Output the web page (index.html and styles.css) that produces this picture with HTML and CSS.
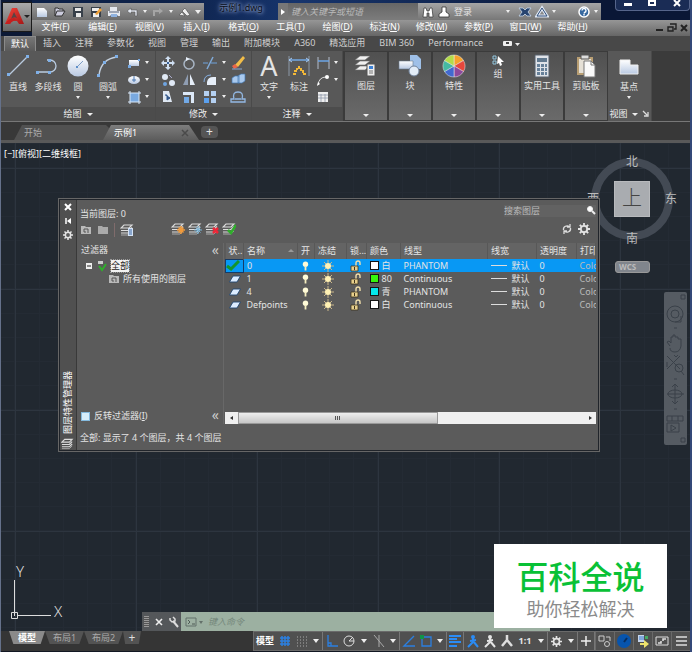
FILE: index.html
```
<!DOCTYPE html>
<html lang="zh-CN">
<head>
<meta charset="utf-8">
<title>示例1.dwg</title>
<link rel="stylesheet" href="styles.css">
</head>
<body>
<svg class="sprite" aria-hidden="true">
  <defs>
    <linearGradient id="pale" x1="0" y1="0" x2="0" y2="1"><stop offset="0" stop-color="#fff"/><stop offset="1" stop-color="#b9c9e2"/></linearGradient>
    <linearGradient id="red" x1="0" y1="0" x2="1" y2="1"><stop offset="0" stop-color="#f4473c"/><stop offset="1" stop-color="#a81616"/></linearGradient>
  </defs>
  <symbol id="bulb" viewBox="0 0 10 12"><circle cx="5" cy="4" r="3" fill="#fffbd8"/><path d="M4 6h2v5H4z" fill="#f5eec0"/></symbol>
  <symbol id="sun" viewBox="0 0 12 12"><path d="M6 0v12M0 6h12M2 2l8 8M10 2l-8 8" stroke="#c9b68a" stroke-width="1"/><circle cx="6" cy="6" r="3" fill="#fff1b4"/></symbol>
  <symbol id="lock" viewBox="0 0 12 12"><path d="M6 6V3a2 2 0 0 1 4 0v2" fill="none" stroke="#f1dfaa" stroke-width="1.400"/><path d="M1 6h7v5H1z" fill="#e7cf8c" stroke="#3c331d" stroke-width=".8"/><path d="M4 7h1v3H4z" fill="#40351c"/></symbol>
  <symbol id="sheet" viewBox="0 0 12 8"><path d="M4 1h7.500L8 7H.5z" fill="#dcecff" stroke="#20456f" stroke-width=".9"/></symbol>
  <symbol id="layers" viewBox="0 0 14 12"><path d="M4 1h8L9 4H1zM1 6.500h8l3-3M1 9h8l3-3" fill="none" stroke="#ddd" stroke-width="1.200"/><path d="M1 11h8l3-3" fill="none" stroke="#aaa"/></symbol>
  <symbol id="folder" viewBox="0 0 12 10"><path d="M1 1h4l1 1h5v7H1z" fill="#b9b9b9"/><path d="M4 4h4v4M4 4v3h2" fill="none" stroke="#555"/></symbol>
  <symbol id="gear" viewBox="0 0 12 12"><path d="M6 0v12M0 6h12M1.800 1.800l8.400 8.400M10.200 1.800l-8.400 8.400" stroke="currentColor" stroke-width="1.800"/><circle cx="6" cy="6" r="3.200" fill="#5b5b5b" stroke="currentColor" stroke-width="1.800"/></symbol>
  <symbol id="person" viewBox="0 0 14 14"><circle cx="7" cy="3" r="2" fill="currentColor"/><path d="M7 4v4l-5 5M7 7l5 6M4 7l6-1" fill="none" stroke="currentColor" stroke-width="2"/></symbol>
</svg>

<div class="window">
  <header class="chrome">
    <button class="app" aria-label="应用程序菜单">
      <svg width="28" height="28" viewBox="0 0 28 28"><path d="M2 21L9 5h5l7 16h-5l-2-3q-4-2-7 3z" fill="url(#red)"/><path d="M11 9l3 6q-3-2-6 1z" fill="#5a4444"/><path d="M2 21q4-6 9-6l3 3q-5-1-7 3z" fill="#c51f1f"/><path d="M21 12h6l-3 3z" fill="#222"/></svg>
    </button>
    <div class="titlebar">
      <div class="quick">
        <button aria-label="新建"><svg width="14" height="14"><path d="M2 3h7l3 3v6H2z" fill="url(#pale)"/></svg></button>
        <button aria-label="打开"><svg width="14" height="14"><path d="M2 11V3h3l1 1h4v2M2 11l2-5h8l-3 5z" fill="#ccd" stroke="#333"/></svg></button>
        <button aria-label="保存"><svg width="14" height="14"><path d="M2 2h10v10H2z" fill="#38404a"/><path d="M4 3h6v3H4zM5 8h5v4H5z" fill="#e8e8e8"/></svg></button>
        <button aria-label="另存为"><svg width="14" height="14"><path d="M2 2h10v10H2z" fill="#38404a"/><path d="M3 3h7v3H3zM4 8h6v4H4z" fill="#eee"/><path d="M6 9l5-6 2 2-5 5z" fill="#f0a13a"/></svg></button>
        <button aria-label="打印"><svg width="14" height="14"><path d="M3 2h7v4h3v5H1V6h2z" fill="#e5e8ee"/><path d="M2 7h10M3 11h8" stroke="#57637a"/><path d="M4 9h6v3H4z" fill="#8fb2e0"/></svg></button>
        <button aria-label="放弃"><svg width="14" height="14"><path d="M6 3L2 6l4 3V7h4v4h2V5H6z" fill="#e4e9f2" stroke="#555" stroke-width=".6"/></svg></button>
        <button class="caret" aria-label="放弃列表"></button>
        <button aria-label="重做"><svg width="14" height="14"><path d="M8 3l4 3-4 3V7H4v4H2V5h6z" fill="#a5a5a5"/></svg></button>
        <button class="caret" aria-label="重做列表"></button>
        <button aria-label="格式刷"><svg width="14" height="14"><path d="M2 10l3-3 3 4zM5 6l3-3 5 7-3 1z" fill="#ececec" stroke="#555" stroke-width=".7"/></svg></button>
        <button class="caret big" aria-label="自定义"></button>
      </div>
      <div class="doc-title">示例1.dwg</div>
      <button class="expand" aria-label="展开"><svg width="6" height="8"><path d="M1 1l4 3-4 3z" fill="#fff"/></svg></button>
      <input class="help-search" type="text" aria-label="搜索帮助" placeholder="键入关键字或短语">
      <div class="account">
        <button aria-label="搜索"><svg width="14" height="14"><path d="M2 12l1-9h2l1 3h2l1-3h2l1 9H8V8H6v4z" fill="#fff" stroke="#333" stroke-width=".7"/></svg></button>
        <button class="login"><svg width="14" height="14"><path d="M5 2h4v5l3 2v3H2V9l3-2z" fill="#fff" stroke="#333" stroke-width=".8"/></svg>登录</button>
        <button class="caret" aria-label="登录选项"></button>
        <button aria-label="Exchange"><svg width="14" height="14"><path d="M1 3h4l2 2 2-2h4l-3 4 3 4H9L7 9l-2 2H1l3-4z" fill="#27446f" stroke="#c9d9ee" stroke-width=".8"/></svg></button>
        <button aria-label="A360"><svg width="14" height="14"><path d="M7 3l5 8H2z" fill="none" stroke="#dfe8f6" stroke-width="3"/><path d="M7 3l5 8H2z" fill="none" stroke="#304d76"/></svg></button>
        <button class="caret" aria-label="A360 选项"></button>
        <button class="help" aria-label="帮助"><svg width="14" height="14"><circle cx="7" cy="7" r="5" fill="#36689f" stroke="#fff" stroke-width="1.500"/><path d="M5 5.500a2 2 0 1 1 2.500 2L7 8.500M7 9v1.500" stroke="#fff" stroke-width="1.400" fill="none"/></svg></button>
        <button class="caret" aria-label="帮助选项"></button>
      </div>
      <div class="winbtns">
        <button aria-label="最小化"><svg width="12" height="10"><path d="M2 4h8v3H2z" fill="#fff"/></svg></button>
        <button aria-label="最大化"><svg width="12" height="10"><path d="M3 2h6v4H3z" fill="none" stroke="#fff" stroke-width="2"/></svg></button>
        <button aria-label="关闭"><svg width="12" height="10"><path d="M3 1l6 6M9 1L3 7" stroke="#fff" stroke-width="2"/></svg></button>
      </div>
    </div>
    <nav class="menubar">
      <a href="#">文件(<u>F</u>)</a><a href="#">编辑(<u>E</u>)</a><a href="#">视图(<u>V</u>)</a><a href="#">插入(<u>I</u>)</a><a href="#">格式(<u>O</u>)</a><a href="#">工具(<u>T</u>)</a><a href="#">绘图(<u>D</u>)</a><a href="#">标注(<u>N</u>)</a><a href="#">修改(<u>M</u>)</a><a href="#">参数(<u>P</u>)</a><a href="#">窗口(<u>W</u>)</a><a href="#">帮助(<u>H</u>)</a>
      <div class="mdi">
        <button aria-label="最小化文档"><svg width="10" height="10"><path d="M1 6h7v2H1z" fill="#222"/></svg></button>
        <button aria-label="还原文档"><svg width="10" height="10"><path d="M3 1h6v5H7M1 4h5v4H1z" fill="none" stroke="#222" stroke-width="1.400"/></svg></button>
        <button aria-label="关闭文档"><svg width="10" height="10"><path d="M2 2l6 6M8 2L2 8" stroke="#222" stroke-width="2"/></svg></button>
      </div>
    </nav>
  </header>

  <nav class="tabs">
    <a class="on" href="#">默认</a><a href="#">插入</a><a href="#">注释</a><a href="#">参数化</a><a href="#">视图</a><a href="#">管理</a><a href="#">输出</a><a href="#">附加模块</a><a href="#">A360</a><a href="#">精选应用</a><a href="#">BIM 360</a><a href="#">Performance</a>
    <button class="ribbon-toggle" aria-label="最小化功能区"><svg width="20" height="8"><rect x="1" y="1" width="9" height="5" rx="1" fill="#eee"/><path d="M4 2h3v2H4z" fill="#444"/><path d="M13 3h5l-2.500 3z" fill="#eee"/></svg></button>
  </nav>

  <section class="ribbon">
    <div class="panel draw">
      <div class="tools">
        <button class="tool"><svg width="24" height="26"><path d="M3 22L21 4" stroke="#b9cbe0" stroke-width="1.300"/><path d="M1 20h3v3H1zM20 2h3v3h-3z" fill="#7fb0e8"/></svg><span>直线</span></button>
        <button class="tool"><svg width="26" height="26"><path d="M2 19h13a6 6 0 0 0 0-12h-3" fill="none" stroke="#b9cbe0" stroke-width="1.300"/><path d="M1 18h3v3H1zM13 18h3v3h-3zM13 6h3v3h-3z" fill="#7fb0e8"/></svg><span>多段线</span></button>
        <button class="tool drop"><svg width="24" height="26"><circle cx="12" cy="13" r="10.500" fill="url(#pale)"/><path d="M11 14l6-6" stroke="#7c9cc5"/><path d="M10 13h2v2h-2z" fill="#5d8fc9"/></svg><span>圆</span></button>
        <button class="tool drop"><svg width="24" height="26"><path d="M3 22Q5 6 21 4" fill="none" stroke="#c3cfdd" stroke-width="1.400"/><path d="M1 21h3v3H1zM7 8h3v3H7zM19 2h3v3h-3z" fill="#7fb0e8"/></svg><span>圆弧</span></button>
        <div class="small two">
          <button aria-label="矩形"><svg width="16" height="14"><path d="M3 4h10v6H3z" fill="url(#pale)"/><path d="M2 9h3v3H2zM12 3h2v2h-2z" fill="#77a9e2"/></svg></button><button class="caret" aria-label="矩形列表"></button>
          <button aria-label="椭圆"><svg width="16" height="14"><ellipse cx="8" cy="7" rx="6" ry="4" fill="url(#pale)"/><path d="M6 7h4M8 3v6" stroke="#4b79b3"/></svg></button><button class="caret" aria-label="椭圆列表"></button>
          <button aria-label="图案填充"><svg width="16" height="14"><path d="M4 3h9v9H4z" fill="#79a9e0"/><path d="M2 3h13M2 12h13M4 1v13M13 1v13" stroke="#d8e8fa"/></svg></button><button class="caret" aria-label="填充列表"></button>
        </div>
      </div>
      <button class="label">绘图<i class="tri"></i></button>
    </div>
    <div class="panel modify">
      <div class="tools">
        <div class="small five">
          <button aria-label="移动"><svg width="16" height="14"><path d="M8 0l3 3H9v3h3V4l3 3-3 3V8H9v3h2l-3 3-3-3h2V8H4v2L1 7l3-3v2h3V3H5z" fill="#cfdff2"/><path d="M7 6h2v2H7z" fill="#365f98"/></svg></button>
          <button aria-label="旋转"><svg width="16" height="14"><circle cx="8" cy="8" r="5" fill="none" stroke="#a9b6c5" stroke-width="1.500"/><path d="M5 1l4 2-4 2z" fill="#e6eef8"/></svg></button>
          <button aria-label="修剪"><svg width="16" height="14"><path d="M1 7h5M9 7h6" stroke="#6fa3dd"/><path d="M5 13L11 1" stroke="#7fa9d6" stroke-width="1.500"/></svg></button><button class="caret" aria-label="修剪列表"></button>
          <button aria-label="删除"><svg width="16" height="14"><path d="M5 9l8-9 2 2-7 9z" fill="#f2bd48"/><path d="M5 8l3 3-4 2-2-3z" fill="#e9654a"/><path d="M2 13h10" stroke="#89a5ce"/></svg></button>
          <button aria-label="复制"><svg width="16" height="14"><circle cx="5" cy="4" r="3" fill="#e0e9f5"/><circle cx="5" cy="11" r="2" fill="#6fa4e0"/><circle cx="12" cy="10" r="3" fill="#e0e9f5"/><path d="M9 2l3 3" stroke="#aac"/></svg></button>
          <button aria-label="镜像"><svg width="16" height="14"><path d="M7 1v11H2z" fill="#8f9db2"/><path d="M9 1v11h5z" fill="#e6eef8"/></svg></button>
          <button aria-label="圆角"><svg width="16" height="14"><path d="M5 12V9q1-5 6-5h3v8z" fill="#e6eef8"/><path d="M2 9q0-7 7-7" fill="none" stroke="#84aee0"/></svg></button><button class="caret" aria-label="圆角列表"></button>
          <button aria-label="分解"><svg width="16" height="14"><path d="M2 5l3-2h4v7H2zM8 3l3-2h4v7l-3 2H8z" fill="#a9c9ee" stroke="#4477b0" stroke-width=".7"/></svg></button>
          <button aria-label="拉伸"><svg width="16" height="14"><path d="M3 1h6l3 11H3z" fill="#dfe8f3"/><path d="M5 5h2v5l3-2-3-2" stroke="#31568a" fill="#31568a"/></svg></button>
          <button aria-label="缩放"><svg width="16" height="14"><path d="M2 2h11v11h-3V5H2z" fill="#dce8f7"/><path d="M3 7h5v6H3z" fill="#72a9e6"/></svg></button>
          <button aria-label="阵列"><svg width="16" height="14"><path d="M2 1h5v5H2zM9 1h5v5H9zM9 8h5v5H9z" fill="#b4d0f1"/><path d="M2 8h5v5H2z" fill="#5ba0ee"/></svg></button><button class="caret" aria-label="阵列列表"></button>
          <button aria-label="偏移"><svg width="16" height="14"><path d="M1 12h14v-3h-3q2-7-4-7T4 9H1zM5 9h6" fill="none" stroke="#93b8e3" stroke-width="1.300"/></svg></button>
        </div>
      </div>
      <button class="label">修改<i class="tri"></i></button>
    </div>
    <div class="panel annot">
      <div class="tools">
        <button class="tool drop"><b class="letter">A</b><span>文字</span></button>
        <button class="tool"><svg width="24" height="26"><path d="M2 3v20M22 3v20" stroke="#8c99a8"/><path d="M2 7h20" stroke="#72a8e5" stroke-width="1.500"/><path d="M5 5L2 7l3 2M19 5l3 2-3 2" stroke="#a7cbf5" fill="none"/><path d="M6 21h2v-3h2v-3M12 13v4M14 15v3h2v3h3" stroke="#f3b837" stroke-width="2" stroke-dasharray="3 1" fill="none"/></svg><span>标注</span></button>
        <div class="small two">
          <button aria-label="线性"><svg width="16" height="14"><path d="M3 1v12M14 1v12" stroke="#b3bccb"/><path d="M3 5h11" stroke="#6ba4e6" stroke-width="1.500"/></svg></button><button class="caret" aria-label="线性列表"></button>
          <button aria-label="引线"><svg width="16" height="14"><path d="M3 12q1-8 8-8" fill="none" stroke="#ddd"/><circle cx="12" cy="4" r="2" fill="#fff"/><path d="M2 13l1-4 2 2z" fill="#fff"/></svg></button><button class="caret" aria-label="引线列表"></button>
          <button aria-label="表格"><svg width="16" height="14"><path d="M3 2h10v10H3z" fill="#eee"/><path d="M3 5h10M3 8h10M6 4v8M10 4v8" stroke="#8d98a8" stroke-width=".8"/></svg></button>
        </div>
      </div>
      <button class="label">注释<i class="tri"></i></button>
    </div>
    <button class="fold"><svg width="26" height="26"><path d="M7 3h10l-5 4H2zM7 8h10l-5 4H2zM7 13h10l-5 4H2z" fill="#f0f0f0" stroke="#6b6b6b" stroke-width=".6"/><path d="M14 11h8v12h-8z" fill="#eee" stroke="#555"/><path d="M16 13h4v3h-4z" fill="#3c80d4"/><path d="M16 18h4M16 20h4" stroke="#777"/></svg><span>图层</span><i class="tri"></i></button>
    <button class="fold"><svg width="26" height="26"><path d="M13 2h7l4 4v10H13z" fill="#9fc0e8"/><path d="M2 8h14v8H2z" fill="url(#pale)" stroke="#69798e" stroke-width=".6"/><circle cx="17" cy="18" r="5" fill="#e3edf8" stroke="#71839c"/></svg><span>块</span><i class="tri"></i></button>
    <button class="fold"><svg width="26" height="26"><g transform="translate(13 13)" stroke="#eee" stroke-width=".5"><path d="M0 0V-11A11 11 0 0 1 9.500-5.500Z" fill="#f6a22b"/><path d="M0 0L9.500-5.500A11 11 0 0 1 9.500 5.500Z" fill="#e7473c"/><path d="M0 0L9.500 5.500A11 11 0 0 1 0 11Z" fill="#8d499b"/><path d="M0 0V11A11 11 0 0 1-9.500 5.500Z" fill="#4269cf"/><path d="M0 0L-9.500 5.500A11 11 0 0 1-9.500-5.500Z" fill="#45b9a2"/><path d="M0 0L-9.500-5.500A11 11 0 0 1 0-11Z" fill="#b4dc49"/></g></svg><span>特性</span><i class="tri"></i></button>
    <button class="fold"><svg width="26" height="14"><path d="M8 3h3v3H8zM8 8h3v3H8z" fill="none" stroke="#93c7df"/><path d="M13 3l6 6h-3l1 3-2 1-1-3-2 1z" fill="#fff"/></svg><span>组</span><i class="tri"></i></button>
    <button class="fold"><svg width="26" height="26"><path d="M6 2h14v22H6z" fill="#dfe3e9" stroke="#56606c"/><path d="M8 5h10v4H8z" fill="#61798f"/><path d="M8 11h3v3H8zM12 11h3v3h-3zM16 11h2v3h-2zM8 15h3v3H8zM12 15h3v3h-3zM16 15h2v3h-2zM8 19h3v3H8zM12 19h3v3h-3zM16 19h2v3h-2z" fill="#67819a"/></svg><span>实用工具</span><i class="tri"></i></button>
    <button class="fold"><svg width="26" height="26"><path d="M4 4h16v18H4z" fill="#b89e73"/><path d="M6 6h12v14H6z" fill="#e5e0d6"/><path d="M8 2h8v4H8z" fill="#ddd" stroke="#555"/><path d="M11 8h7l4 4v12H11z" fill="#fafafa" stroke="#777"/><path d="M18 8v4h4" fill="none" stroke="#777"/></svg><span>剪贴板</span><i class="tri"></i></button>
    <div class="panel view">
      <div class="tools"><button class="tool drop"><svg width="24" height="26"><path d="M3 7h10v5h8v9H3z" fill="url(#pale)" stroke="#eee"/></svg><span>基点</span></button></div>
      <button class="label">视图<i class="tri"></i><svg width="8" height="8"><path d="M1 1l4 4M6 2v4H2" stroke="#ddd" stroke-width="1.300" fill="none"/></svg></button>
    </div>
  </section>

  <nav class="files">
    <a href="#">开始</a>
    <a class="on" href="#">示例1<svg width="8" height="8"><path d="M1 1l6 6M7 1L1 7" stroke="#4a4a4a" stroke-width="1.500"/></svg></a>
    <button aria-label="新图形">+</button>
  </nav>

  <main class="canvas">
    <p class="viewport">[−][俯视][二维线框]</p>

    <div class="cube">
      <span class="north">北</span><span class="east">东</span><span class="south">南</span><span class="west">西</span>
      <span class="face">上</span>
    </div>
    <button class="wcs">WCS</button>
    <div class="navbar">
      <svg viewBox="0 0 23 153" fill="none" stroke="#3a4149"><path d="M17 3h4v4h-4zM17 146h4v4h-4z"/><circle cx="11" cy="22" r="8"/><circle cx="11" cy="22" r="4"/><path d="M17 24v6h-6M10 36h3M6 54l-3-4 2-1 2 2v-6h2v-2h2v2h3v2h3v7q-1 6-6 6t-5-4M3 64l13 13M16 64L3 77M10 63l2 2 2-2M3 70v5"/><circle cx="15" cy="76" r="4"/><path d="M17 79l3 4M10 87h3M11 92v20M3 102h17M8 95l3-3 3 3M8 109l3 3 3-3"/><ellipse cx="11" cy="102" rx="7" ry="4"/><path d="M10 117h3M3 124h16v5H3zM8 124v5M14 124v5M3 131h12v9H3zM7 133l5 3-5 3z"/></svg>
    </div>

    <section class="palette" aria-label="图层特性管理器">
      <div class="spine">
        <button aria-label="关闭"><svg width="10" height="10"><path d="M2 2l6 6M8 2L2 8" stroke="#fff" stroke-width="2"/></svg></button>
        <button aria-label="自动隐藏"><svg width="10" height="10"><path d="M3 2v6" stroke="#fff" stroke-width="1.500"/><path d="M8 2v6L4 5z" fill="#fff"/></svg></button>
        <button aria-label="特性"><svg width="10" height="10"><use href="#gear"/></svg></button>
        <span>图层特性管理器</span>
        <svg width="13" height="12"><use href="#layers"/></svg>
      </div>
      <div class="body">
        <div class="current"><span>当前图层: 0</span>
          <label class="find"><input type="text" aria-label="搜索图层" placeholder="搜索图层"><svg width="10" height="10"><circle cx="4" cy="4" r="2.500" fill="#fff" stroke="#eee"/><path d="M6 6l3 3" stroke="#eee" stroke-width="2"/></svg></label>
        </div>
        <div class="bar">
          <div class="set filters">
            <button aria-label="新建特性过滤器"><svg width="12" height="10"><use href="#folder"/></svg></button>
            <button aria-label="新建组过滤器"><svg width="12" height="10"><path d="M1 1h4l1 1h5v7H1z" fill="#aaa"/></svg></button>
            <i class="rule"></i>
            <button aria-label="图层状态管理器"><svg width="14" height="12"><use href="#layers"/><path d="M8 4h5v8H8z" fill="#d5e3f5"/><path d="M9 6h3M9 8h3M9 10h3" stroke="#3d68a6"/></svg></button>
          </div>
          <div class="set ops">
            <button aria-label="新建图层"><svg width="14" height="12"><use href="#layers"/><path d="M10 3v8M6 7h8M7.500 4.500l5 5M12.500 4.500l-5 5" stroke="#f19a3a" stroke-width="1.500"/></svg></button>
            <button aria-label="冻结的新图层"><svg width="14" height="12"><use href="#layers"/><path d="M10 3v8M6 7h8M7.500 4.500l5 5M12.500 4.500l-5 5" stroke="#79b6da"/></svg></button>
            <button aria-label="删除图层"><svg width="14" height="12"><use href="#layers"/><path d="M8 5l5 5M13 5l-5 5" stroke="#ed2637" stroke-width="2.500"/></svg></button>
            <button aria-label="置为当前"><svg width="14" height="12"><use href="#layers"/><path d="M6 7l3 3 5-8" fill="none" stroke="#2fae2b" stroke-width="2.500"/></svg></button>
          </div>
          <div class="set last">
            <button aria-label="刷新"><svg width="12" height="12"><path d="M2.500 7a3.500 3.500 0 0 1 6-3M9.500 5a3.500 3.500 0 0 1-6 3M9 1v3H6M3 11V8h3" fill="none" stroke="#ddd" stroke-width="1.300"/></svg></button>
            <button aria-label="设置"><svg width="12" height="12"><use href="#gear"/></svg></button>
          </div>
        </div>
        <div class="split">
          <div class="tree">
            <div class="head"><span>过滤器</span><button aria-label="收拢">«</button></div>
            <ul>
              <li><svg width="24" height="12"><path d="M1 3h6v6H1z" fill="#eee"/><path d="M2 6h4" stroke="#222"/><path d="M13 1h5v3h-5z" fill="#ccc"/><path d="M14 6l3 4 4-6" stroke="#2fae2b" stroke-width="2" fill="none"/></svg><mark>全部</mark></li>
              <li class="child"><svg width="12" height="10"><use href="#folder"/></svg>所有使用的图层</li>
            </ul>
            <div class="foot"><label><input type="checkbox">反转过滤器(<u>I</u>)</label><button aria-label="收拢">«</button></div>
          </div>
          <div class="list">
            <table>
              <colgroup><col class="c-state"><col class="c-name"><col class="c-on"><col class="c-freeze"><col class="c-lock"><col class="c-color"><col class="c-type"><col class="c-weight"><col class="c-trans"><col></colgroup>
              <thead><tr><th>状..</th><th class="sorted">名称<i></i></th><th>开</th><th>冻结</th><th>锁...</th><th>颜色</th><th>线型</th><th>线宽</th><th>透明度</th><th>打印</th></tr></thead>
              <tbody>
                <tr class="sel"><td class="state"><svg width="14" height="11"><path d="M1 6l4 3 8-8" fill="none" stroke="#14952c" stroke-width="3"/></svg></td><td>0</td><td><svg width="9" height="12"><use href="#bulb"/></svg></td><td><svg width="12" height="12"><use href="#sun"/></svg></td><td><svg width="12" height="12"><use href="#lock"/></svg></td><td><i class="chip white"></i>白</td><td>PHANTOM</td><td><i class="dash"></i>默认</td><td>0</td><td class="dim">Colo</td></tr>
                <tr><td><svg width="12" height="8"><use href="#sheet"/></svg></td><td>1</td><td><svg width="9" height="12"><use href="#bulb"/></svg></td><td><svg width="12" height="12"><use href="#sun"/></svg></td><td><svg width="12" height="12"><use href="#lock"/></svg></td><td><i class="chip green"></i>80</td><td>Continuous</td><td><i class="dash"></i>默认</td><td>0</td><td class="dim">Colo</td></tr>
                <tr><td><svg width="12" height="8"><use href="#sheet"/></svg></td><td>4</td><td><svg width="9" height="12"><use href="#bulb"/></svg></td><td><svg width="12" height="12"><use href="#sun"/></svg></td><td><svg width="12" height="12"><use href="#lock"/></svg></td><td><i class="chip cyan"></i>青</td><td>PHANTOM</td><td><i class="dash"></i>默认</td><td>0</td><td class="dim">Colo</td></tr>
                <tr><td><svg width="12" height="8"><use href="#sheet"/></svg></td><td>Defpoints</td><td><svg width="9" height="12"><use href="#bulb"/></svg></td><td><svg width="12" height="12"><use href="#sun"/></svg></td><td><svg width="12" height="12"><use href="#lock"/></svg></td><td><i class="chip white"></i>白</td><td>Continuous</td><td><i class="dash"></i>默认</td><td>0</td><td class="dim">Colo</td></tr>
              </tbody>
            </table>
            <div class="scroll">
              <button aria-label="向左"><svg width="6" height="6"><path d="M4 1v4L1 3z" fill="#333"/></svg></button>
              <div class="track"><div class="thumb"><svg width="8" height="6"><path d="M1.500 1v4M3.500 1v4M5.500 1v4" stroke="#555"/></svg></div></div>
              <button aria-label="向右"><svg width="6" height="6"><path d="M2 1v4l3-2z" fill="#333"/></svg></button>
            </div>
          </div>
        </div>
        <p class="summary">全部: 显示了 4 个图层，共 4 个图层</p>
      </div>
    </section>

    <svg class="ucs" width="64" height="60" fill="none" stroke="#ddd"><path d="M8.500 16v36M12 51.500h33M5.500 48.500h6v6h-6z"/><text x="10" y="13">Y</text><text x="48" y="53">X</text></svg>

    <div class="command">
      <span class="grip"></span>
      <button aria-label="关闭"><svg width="10" height="10"><path d="M2 2l6 6M8 2L2 8" stroke="#eee" stroke-width="1.600"/></svg></button>
      <button aria-label="自定义"><svg width="12" height="12"><path d="M5 5l5 6" stroke="#ddd" stroke-width="2"/><path d="M2 2v2l2 2 3-1V3L5 1" fill="none" stroke="#ddd" stroke-width="1.500"/></svg></button>
      <label class="prompt"><svg width="20" height="12"><path d="M1 2h10v8H1z" fill="none" stroke="#63706a"/><path d="M3 4l2 2-2 2M7 8h3" fill="none" stroke="#4f5b55"/><path d="M14 5h4l-2 3z" fill="#63706a"/></svg><input type="text" aria-label="命令" placeholder="键入命令"></label>
    </div>

    <aside class="badge"><strong>百科全说</strong><span>助你轻松解决</span></aside>
  </main>

  <footer class="bottom">
    <nav class="layouts"><a class="on" href="#">模型</a><a href="#">布局1</a><a href="#">布局2</a><button aria-label="新建布局">+</button></nav>
    <div class="status">
      <button class="model">模型</button>
      <button aria-label="栅格"><svg width="14" height="14"><path d="M2 4h10M2 7h10M2 10h10M4 2v10M7 2v10M10 2v10" stroke="#2b7fe0" stroke-width="1.500"/></svg></button>
      <button aria-label="捕捉"><svg width="14" height="14"><path d="M2 3h11M2 6h11M2 9h11M2 12h11" stroke="#aaa" stroke-dasharray="1 2"/></svg></button>
      <button class="caret end" aria-label="捕捉设置"></button>
      <button aria-label="正交"><svg width="14" height="14"><path d="M3 1v11h10M3 9h3v3" stroke="#2b7fe0" fill="none" stroke-width="1.300"/></svg></button>
      <button aria-label="极轴"><svg width="14" height="14"><circle cx="7" cy="7" r="5" fill="none" stroke="#ddd"/><path d="M7 7h5M7 7l4-4" stroke="#ddd"/></svg></button>
      <button class="caret" aria-label="极轴设置"></button>
      <button aria-label="等轴测"><svg width="14" height="14"><path d="M2 1l10 12M7 1v12" stroke="#aaa"/></svg></button>
      <button class="caret end" aria-label="等轴测设置"></button>
      <button aria-label="追踪"><svg width="14" height="14"><path d="M12 2L2 12h11" fill="none" stroke="#2b7fe0" stroke-width="1.400"/></svg></button>
      <button aria-label="对象捕捉"><svg width="14" height="14"><path d="M3 3h9v9H3z" fill="none" stroke="#2b7fe0" stroke-width="1.300"/><path d="M1 1h4v4H1z" fill="#129447"/></svg></button>
      <button class="caret end" aria-label="对象捕捉设置"></button>
      <button class="end" aria-label="线宽"><svg width="14" height="14"><path d="M1 2h12M1 5h8M1 8h12M1 12h8" stroke="#2b8cf5" stroke-width="2"/></svg></button>
      <button class="blue" aria-label="注释可见性"><svg width="14" height="14"><use href="#person"/></svg></button>
      <button aria-label="自动缩放"><svg width="14" height="14"><use href="#person"/></svg></button>
      <button aria-label="注释比例"><svg width="14" height="14"><path d="M7 1v6M7 6l-5 6M7 6l5 6" fill="none" stroke="#ddd" stroke-width="2.500"/></svg></button>
      <button class="scale">1:1</button>
      <button class="caret end" aria-label="比例列表"></button>
      <button aria-label="切换工作空间"><svg width="11" height="11"><use href="#gear"/></svg></button>
      <button class="caret end" aria-label="工作空间列表"></button>
      <button class="end" aria-label="注释监视器"><svg width="12" height="14"><path d="M6 2v10M1 7h10" stroke="#eee" stroke-width="1.500"/></svg></button>
      <button class="wide" aria-label="隔离对象"><svg width="14" height="14"><path d="M1 2h5v5H1zM8 3h4v4" fill="none" stroke="#ccc"/><circle cx="9" cy="10" r="2.500" fill="none" stroke="#ccc"/></svg></button>
      <button class="wide" aria-label="硬件加速"><svg width="16" height="16"><circle cx="8" cy="8" r="7" fill="#0754ad"/><path d="M8 9l3-4" stroke="#082e5f" stroke-width="2"/></svg></button>
      <button class="wide" aria-label="性能"><svg width="14" height="14"><path d="M2 1h6v7H2z" fill="#c6d5eb"/><path d="M3 3h5M3 5h5" stroke="#3a79cb"/><path d="M4 9h4V6l5 4-5 4v-3H4z" fill="#eee36c"/><path d="M9 2h3v3H9z" fill="#45a963"/></svg></button>
      <button class="wide" aria-label="全屏显示"><svg width="14" height="14"><path d="M1 3h12v8H1z" fill="none" stroke="#ddd"/><path d="M8 7V5h3M6 7v2H3" fill="none" stroke="#ddd" stroke-width="1.600"/></svg></button>
      <button class="wide" aria-label="自定义"><svg width="14" height="14"><path d="M2 3h11M2 7h11M2 11h11" stroke="#ddd" stroke-width="1.500"/></svg></button>
    </div>
  </footer>
</div>
</body>
</html>
```
FILE: styles.css
```
* { box-sizing: border-box; }
body, p, ul { margin: 0; padding: 0; }
body { background: #0c1935; color: #e4e4e4; font: 9px/12px "Noto Sans", "Noto Sans CJK SC", sans-serif; }
button, input { font: inherit; color: inherit; background: none; border: 0; padding: 0; margin: 0; }
button { display: flex; align-items: center; justify-content: center; flex: none; }
a { color: inherit; text-decoration: none; }
svg { display: block; flex: none; }
i { font-style: normal; flex: none; }
.sprite { position: absolute; width: 0; height: 0; }

.window {
  display: flex; flex-direction: column; min-height: 100vh;
  border-left: 1px solid #65718a; border-right: 2px solid #344878; background: #393939;
}

/* carets */
.caret::after, .tri, .drop::after {
  content: ""; display: block; border: 3px solid transparent; border-top-color: #eee; border-bottom: 0;
}
.caret { width: 8px; }
.caret::after, .drop::after { border-width: 2px; border-bottom: 0; border-top-width: 3px; }

/* title and menu */
.chrome { display: grid; grid-template-columns: 31px 1fr; background: #0c1935; }
.app { grid-row: span 2; margin: 2px 0 4px 1px; background: linear-gradient(#aaa, #666); border: 1px solid #1a1a1a; overflow: hidden; }
.titlebar { display: flex; height: 20px; min-width: 0; background: linear-gradient(90deg, #0d2148 20%, #17356d 40%, #0a1736 85%); }
.quick, .account { display: flex; align-items: center; margin-top: 3px; padding: 0 1px; background: linear-gradient(#999, #6c6c6c); }
.quick { width: 172px; }
.quick button { width: 18px; }
.quick .caret { width: 8px; }
.quick .big { width: 10px; }
.quick .big::after { border-width: 4px 3px 0; }
.doc-title { width: 74px; line-height: 12px; padding-top: 2px; text-align: center; color: #0a0e18; text-shadow: 0 0 3px #8397c0, 0 0 4px #8397c0, 0 0 6px #8397c0; }
.expand { width: 10px; margin-top: 3px; background: #777; }
.help-search { flex: 0 1 130px; min-width: 0; margin-top: 3px; padding: 0 3px; background: linear-gradient(#666, #7c7c7c); font-style: italic; }
.help-search::placeholder { color: #bbb; opacity: 1; }
.account { width: 183px; background: linear-gradient(#a5a5a5, #777); }
.account button { width: 17px; }
.account .caret { width: 8px; }
.account .login { width: auto; gap: 3px; margin: 0 auto 0 1px; }
.account .caret:nth-child(3) { margin-right: 4px; }
.account .help { margin: 0 0 0 17px; }
.winbtns { display: flex; flex: 0 1 75px; margin: 0 0 9px auto; border: 1px solid #56658b; border-top: 0; border-radius: 0 0 4px 4px; background: #1a2c55; }
.winbtns button { flex: 1; padding-bottom: 2px; }
.menubar { display: flex; height: 16px; background: linear-gradient(#969696, #666); }
.menubar a { width: 47px; line-height: 14px; text-align: center; color: #fff; }
.mdi { display: flex; gap: 2px; margin-left: auto; padding-right: 1px; }

/* ribbon tabs */
.tabs { display: flex; height: 15px; padding-left: 3px; background: #484848; color: #d0d0d0; }
.tabs a { padding: 0 7px; line-height: 14px; }
.tabs .on { background: linear-gradient(#777, #5a5a5a); border: 1px solid #8a8a8a; border-bottom: 0; padding: 0 6px; color: #fff; line-height: 13px; }
.ribbon-toggle { margin-left: 12px; }

/* ribbon */
.ribbon { display: flex; height: 71px; background: #3b3b3b; border-bottom: 1px solid #777; }
.panel { display: flex; flex-direction: column; background: #585858; border-right: 1px solid #4a4a4a; }
.draw { width: 155px; }
.modify { width: 96px; }
.annot { width: 91px; margin-right: 1px; }
.view { width: 44px; }
.tools { flex: 1; display: flex; align-items: flex-start; padding-left: 2px; }
.label { height: 14px; gap: 5px; background: #4c4c4c; color: #eee; }
.view .label { background: none; gap: 4px; }
.tool { flex-direction: column; width: 30px; justify-content: flex-start; white-space: nowrap; }
.tool svg { height: 29px; padding-top: 2px; }
.tool span { line-height: 13px; }
.tool.drop::after { margin-top: 3px; }
.view .tool { width: 38px; }
.letter { height: 29px; font-size: 27px; line-height: 29px; font-weight: 400; }
.small { display: grid; grid-auto-rows: 17px; align-items: center; padding-top: 3px; }
.two { grid-template-columns: 18px 8px; margin-left: 2px; }
.five { grid-template-columns: 20px 22px 20px 8px 20px; }
.annot .two { margin-left: 0; }
.fold { flex-direction: column; justify-content: flex-start; width: 42px; margin: 1px 1px 1px; padding: 1px 0 3px; background: linear-gradient(#505050, #6a6a6a); white-space: nowrap; }
.fold span { line-height: 14px; }
.fold .tri { margin-top: auto; }

/* drawing tabs */
.files { display: flex; align-items: flex-end; height: 21px; padding-left: 13px; border-bottom: 3px solid #595959; background: #383838; }
.files a { display: flex; align-items: center; width: 96px; height: 15px; padding: 0 10px; background: #515151; color: #aaa; clip-path: polygon(8px 0, 92px 0, 100% 4px, 100% 100%, 0 100%); }
.files a.on { justify-content: space-between; margin-left: -7px; background: linear-gradient(#7d7d7d, #5c5c5c); color: #fff; padding: 0 10px 0 11px; clip-path: polygon(8px 0, 86px 0, 100% 100%, 0 100%); }
.files button { width: 17px; height: 12px; margin: 0 0 2px 2px; border-radius: 4px; background: #555; font-size: 12px; }

/* drawing area */
.canvas {
  flex: 1; position: relative; min-height: 488px; overflow: hidden;
  background-color: #212830;
  background-image:
    linear-gradient(90deg, #2d353f 1px, transparent 1px), linear-gradient(#2d353f 1px, transparent 1px),
    repeating-linear-gradient(90deg, #242b34 0 1px, transparent 1px 24px), repeating-linear-gradient(#242b34 0 1px, transparent 1px 24px);
  background-size: 121px 121px; background-position: 14px 25px;
}
.viewport { padding: 5px 3px; color: #fff; }
.cube { position: absolute; right: 17px; top: 15px; width: 82px; height: 82px; border: 8px solid #434a54; border-radius: 50%; display: grid; place-items: center; font-size: 12px; line-height: 14px; color: #bbb; }
.cube span { position: absolute; }
.cube .north { top: -11px; }
.cube .south { bottom: -14px; }
.cube .east { right: -12px; }
.cube .west { left: -12px; }
.cube .face { position: static; width: 36px; height: 36px; background: #a9acb0; border: 1px solid #b8babd; color: #444; font-size: 20px; line-height: 32px; text-align: center; font-weight: 300; }
.wcs { position: absolute; right: 40px; top: 118px; width: 35px; height: 12px; padding-left: 3px; border: 1px solid #999; border-radius: 3px; background: #80858c; color: #bbb; font-size: 8px; font-weight: 700; justify-content: flex-start; }
.navbar { position: absolute; right: 3px; top: 149px; width: 23px; height: 153px; background: #555b62; border-radius: 2px; }

/* layer palette */
.palette { position: absolute; left: 57px; top: 55px; width: 542px; height: 254px; display: flex; background: #5b5b5b; border: 1px solid #666; outline: 1px solid #20242a; outline-offset: -2px; }
.spine { display: flex; flex-direction: column; align-items: center; gap: 4px; width: 18px; padding: 3px 0 1px; background: #505050; border-right: 1px solid #393939; }
.spine span { margin-top: auto; writing-mode: vertical-rl; text-orientation: sideways; transform: rotate(180deg); color: #fff; }
.body { flex: 1; min-width: 0; display: flex; flex-direction: column; padding: 4px 3px; }
.current { display: flex; align-items: center; justify-content: space-between; height: 20px; }
.current > span { padding-top: 2px; }
.find { display: flex; width: 92px; align-self: flex-start; background: #626262; margin-top: 2px; }
.find input { flex: 1; min-width: 0; height: 12px; }
.find input::placeholder { color: #bbb; opacity: 1; }
.bar { display: flex; height: 20px; align-items: flex-start; }
.set { display: flex; gap: 5px; align-items: center; }
.ops { gap: 3px; margin-left: 37px; }
.last { margin-left: auto; padding-right: 6px; }
.rule { width: 1px; height: 14px; background: #806c6c; }
.split { flex: 1; display: flex; min-height: 0; }
.tree { width: 144px; display: flex; flex-direction: column; padding-right: 4px; border-right: 1px solid #686868; }
.head, .foot { display: flex; justify-content: space-between; padding: 1px 0 1px 1px; height: 16px; }
.head button, .foot button { font-size: 14px; color: #ccc; height: 12px; }
.tree ul { list-style: none; padding-left: 5px; }
.tree li { display: flex; align-items: center; height: 13px; gap: 2px; }
.tree .child { padding-left: 23px; gap: 3px; white-space: nowrap; }
.tree mark { background: #f2f2f2; color: #222; line-height: 12px; outline: 1px dotted #999; }
.foot { margin-top: auto; }
.foot label { display: flex; align-items: center; }
.foot input { appearance: none; width: 9px; height: 9px; margin-right: 4px; background: #d6edfa; border: 1px solid #85bade; }
.list { flex: 1; min-width: 0; margin-left: 1px; display: flex; flex-direction: column; overflow: hidden; }
table { width: 100%; table-layout: fixed; border-collapse: collapse; }
th, td { padding: 0 0 0 3px; overflow: hidden; white-space: nowrap; text-align: left; font-weight: 400; }
th { height: 16px; background: #646464; border-right: 1px solid #585858; }
td { height: 13px; line-height: 13px; }
.c-state { width: 18px; } .c-name { width: 54px; } .c-on { width: 17px; } .c-freeze { width: 32px; } .c-lock { width: 20px; }
.c-color { width: 34px; } .c-type { width: 87px; } .c-weight { width: 49px; } .c-trans { width: 40px; }
td:nth-child(4) svg { margin-left: 4px; }
.sorted i { float: right; margin: 4px 3px 0 0; border: 3px solid transparent; border-top: 0; border-bottom-color: #999; }
.sel { background: #0898f4; }
.state { border: 1px solid #163c68; padding: 0; }
.dim { color: #bbb; }
.chip { display: inline-block; width: 9px; height: 9px; margin-right: 3px; border: 1px solid #151515; vertical-align: -1px; }
.white { background: #fff; } .green { background: #35f50c; } .cyan { background: #04e8ec; }
.dash { display: inline-block; width: 16px; height: 1px; margin-right: 5px; background: #ddd; vertical-align: 3px; }
.scroll { display: flex; height: 12px; margin-top: auto; background: #f0f0f0; }
.scroll button { width: 13px; }
.track { flex: 1; display: flex; }
.thumb { width: 58%; display: grid; place-items: center; border: 1px solid #999; background: linear-gradient(#eee, #c6c6c6); }
.summary { padding: 7px 0 3px; line-height: 13px; }

/* coordinate icon, command line, badge */
.ucs { position: absolute; left: 5px; bottom: 7px; }
.ucs text { fill: #ddd; stroke: none; font-size: 15px; font-weight: 300; }
.command { position: absolute; left: 141px; right: 140px; bottom: 0; height: 19px; display: flex; align-items: center; background: #54575a; }
.command button { width: 15px; }
.grip { width: 5px; height: 11px; margin: 0 2px; background: repeating-linear-gradient(#999 0 1px, #555 1px 2px); }
.prompt { flex: 1; display: flex; align-items: center; gap: 3px; height: 100%; padding-left: 4px; background: #9cb0a1; }
.prompt input { flex: 1; min-width: 0; }
.prompt input::placeholder { color: #74877b; opacity: 1; font-style: italic; }
.badge { position: absolute; right: 23px; bottom: 3px; width: 173px; height: 84px; display: flex; flex-direction: column; align-items: center; padding-top: 8px; background: #fff; color: #8b8b8b; font-size: 18px; line-height: 20px; font-family: "Noto Sans CJK SC", sans-serif; }
.badge strong { color: #09c136; font-size: 32px; line-height: 46px; font-weight: 500; }

/* layout tabs and status */
.bottom { display: flex; justify-content: space-between; height: 22px; background: #353535; border-bottom: 2px solid #121722; }
.layouts { display: flex; padding-left: 8px; color: #aaa; }
.layouts a, .layouts button { height: 13px; line-height: 13px; background: #535353; text-align: center; clip-path: polygon(0 0, 100% 0, 88% 100%, 12% 100%); }
.layouts a { width: 39px; }
.layouts .on { width: 36px; background: #8a8a8a; color: #fff; font-weight: 700; }
.layouts button { width: 18px; font-size: 12px; color: #ddd; }
.status { display: flex; background: #505050; border: 1px solid #6a6a6a; border-right: 0; }
.status button { width: 17px; }
.status .model { width: 22px; font-weight: 700; color: #fff; }
.status .caret { width: 13px; }
.status .caret::after { border-width: 4px 3px 0; }
.status .scale { width: 20px; font-weight: 700; }
.status .wide { width: 19px; border-left: 1px solid #6a6a6a; }
.status .end { border-right: 1px solid #777; }
.status .blue { color: #2b8cf5; }
```
